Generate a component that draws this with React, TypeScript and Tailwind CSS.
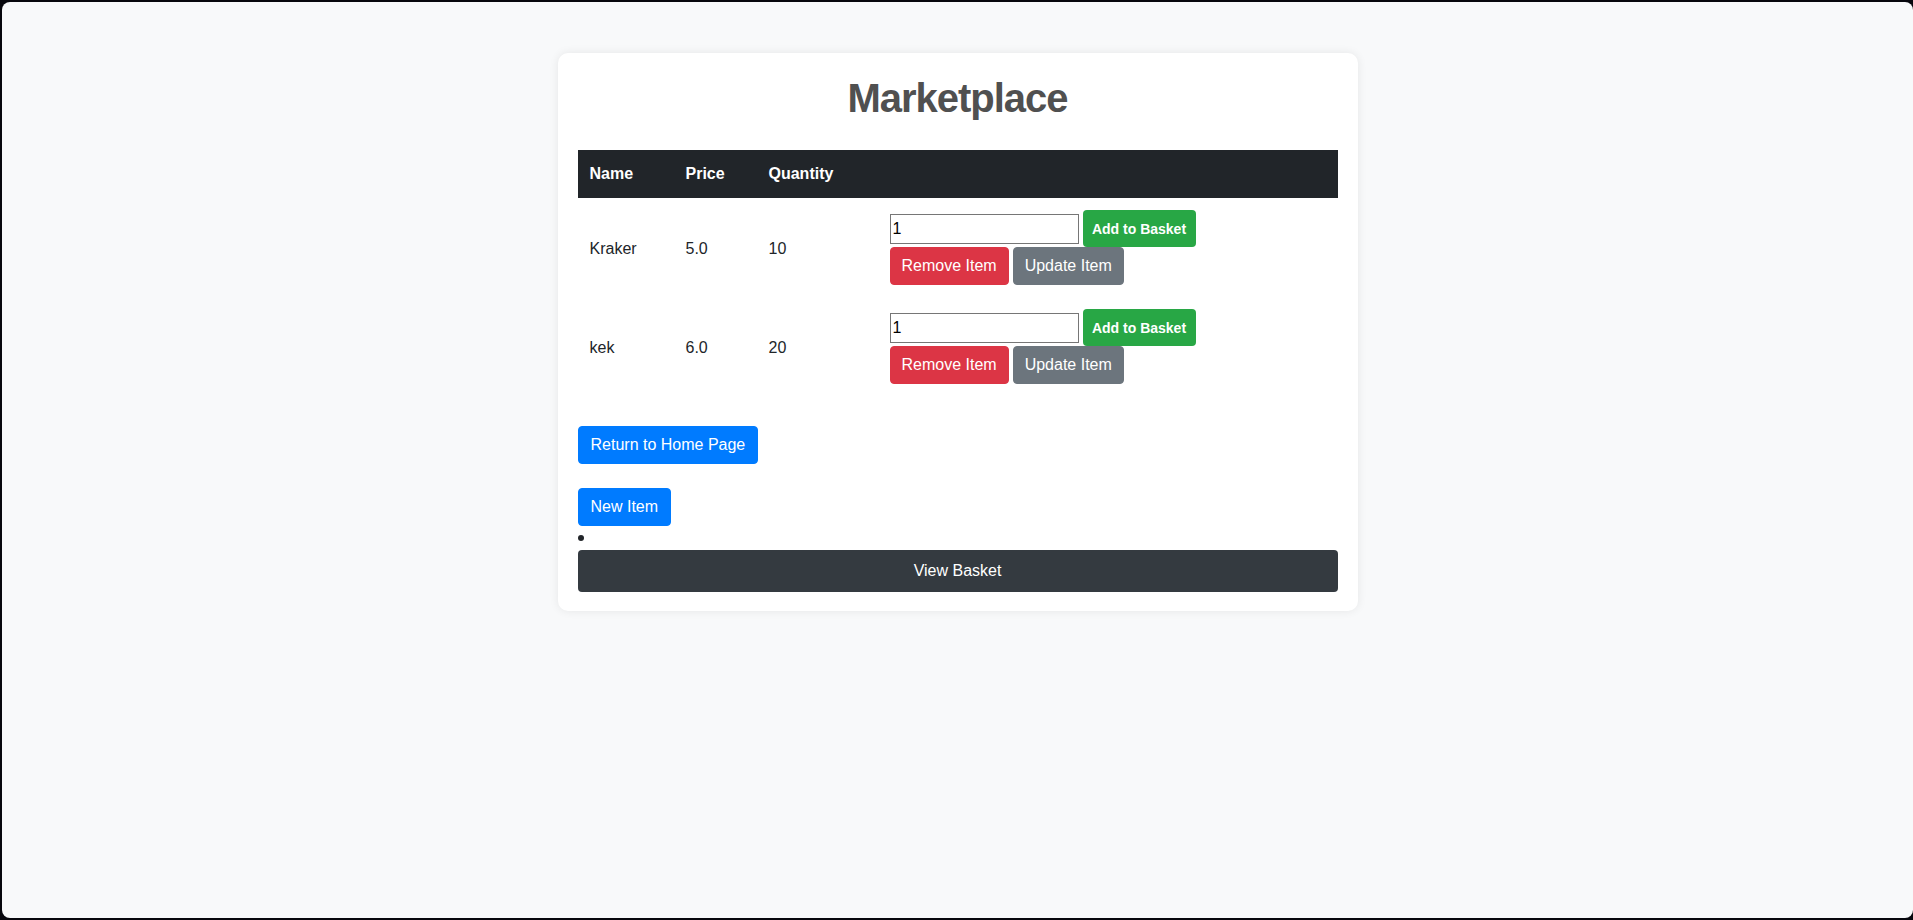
import React from "react";

// ── Data ─────────────────────────────────────────────────────────────────────

const items = [
  { name: "Kraker", price: "5.0", quantity: 10 },
  { name: "kek", price: "6.0", quantity: 20 },
];

const font = { fontFamily: '"Liberation Sans", Arial, sans-serif' };

// ── Item row ─────────────────────────────────────────────────────────────────

function ItemRow({ item }: { item: (typeof items)[number] }) {
  return (
    <tr className="text-[#212529]">
      <td className="px-3 pt-[13px] pb-[11px] align-middle">{item.name}</td>
      <td className="px-3 pt-[13px] pb-[11px] align-middle">{item.price}</td>
      <td className="px-3 pt-[13px] pb-[11px] align-middle">{item.quantity}</td>
      <td className="px-3 py-3 align-middle">
        <div className="flex flex-col items-start">
          <div className="flex items-center gap-[4px]">
            <input
              type="number"
              defaultValue={1}
              className="w-[189px] h-[30px] border border-[#767676] px-[2px] text-[16px] text-black bg-white outline-none [appearance:textfield]"
            />
            <button className="h-[37px] w-[113px] flex items-center justify-center rounded-[4px] bg-[#28a745] text-white text-[14px] font-bold">
              Add to Basket
            </button>
          </div>
          <div className="flex gap-[4px]">
            <button className="h-[38px] px-[11px] rounded-[4px] bg-[#dc3545] text-white border border-[#dc3545]">
              Remove Item
            </button>
            <button className="h-[38px] px-[11px] rounded-[4px] bg-[#6c757d] text-white border border-[#6c757d]">
              Update Item
            </button>
          </div>
        </div>
      </td>
    </tr>
  );
}

// ── Page ─────────────────────────────────────────────────────────────────────

export default function App() {
  return (
    <div className="h-[920px] bg-[#07070d] pt-[2px] pl-[2px] pb-[2px]" style={font}>
      <div className="h-full bg-[#f8f9fa] rounded-[8px] pt-[51px]">
        <div className="w-[800px] mx-auto bg-white rounded-[10px] shadow-[0_0_10px_rgba(0,0,0,0.08)] px-5 pt-[21px] pb-[19px] text-[16px] leading-6">
          <h1 className="text-center text-[40px] leading-[48px] font-bold tracking-[-1px] text-[#505050] mb-[28px]">
            Marketplace
          </h1>

          <table className="w-full table-fixed border-collapse">
            <thead>
              <tr className="bg-[#212529] text-white">
                <th className="w-[96px] px-3 py-3 text-left font-bold">Name</th>
                <th className="w-[83px] px-3 py-3 text-left font-bold">Price</th>
                <th className="w-[121px] px-3 py-3 text-left font-bold">Quantity</th>
                <th className="px-3 py-3" />
              </tr>
            </thead>
            <tbody>
              {items.map(item => <ItemRow key={item.name} item={item} />)}
            </tbody>
          </table>

          <div className="mt-[30px] flex flex-col items-start gap-6">
            <button className="h-[38px] px-3 rounded-[4px] bg-[#007bff] text-white border border-[#007bff]">
              Return to Home Page
            </button>
            <button className="h-[38px] px-3 rounded-[4px] bg-[#007bff] text-white border border-[#007bff]">
              New Item
            </button>
          </div>

          {/* empty list item */}
          <div className="h-6 flex items-center">
            <span className="w-[6px] h-[6px] rounded-full bg-[#212529]" />
          </div>

          <button className="w-full h-[42px] rounded-[4px] bg-[#343a40] text-white">
            View Basket
          </button>
        </div>
      </div>
    </div>
  );
}
